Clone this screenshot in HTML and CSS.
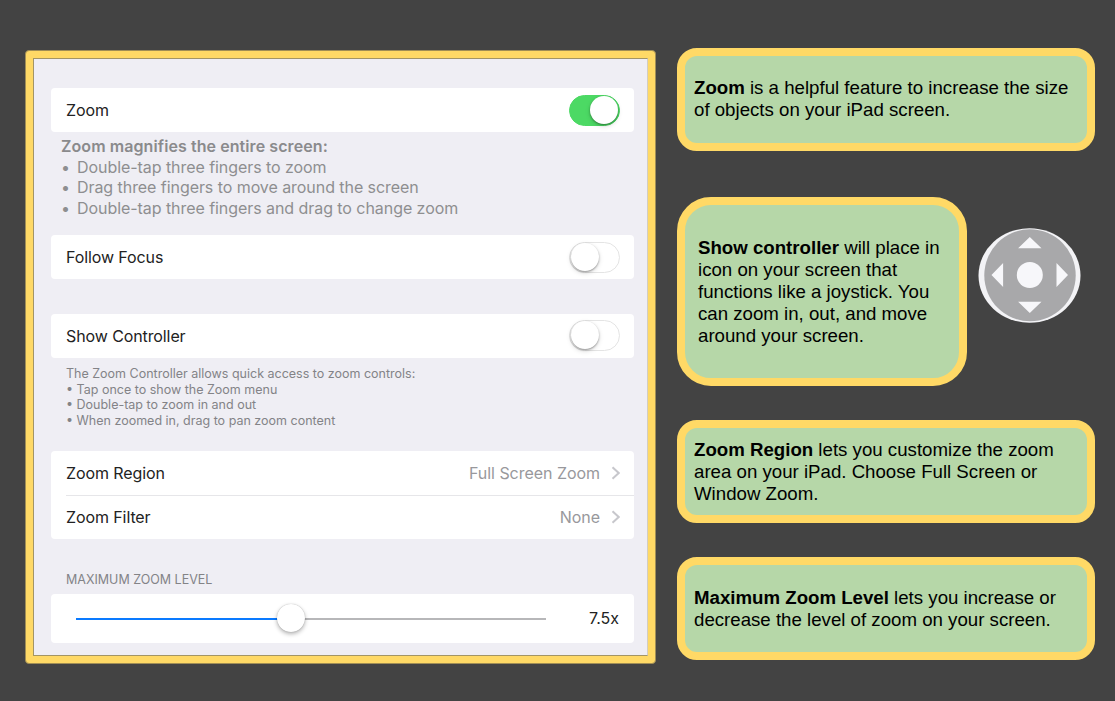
FILE: index.html
```html
<!DOCTYPE html>
<html lang="en">
<head>
    <meta charset="UTF-8">
    <meta name="viewport" content="width=device-width, initial-scale=1.0">
    <title>iPad Zoom Settings</title>
    <link rel="stylesheet" href="styles.css">
</head>
<body>
    <div class="frame">
        <div class="settings">
            <div class="card row">
                <span>Zoom</span>
                <span class="switch on"><span class="knob"></span></span>
            </div>
            <div class="help">
                <strong>Zoom magnifies the entire screen:</strong>
                <ul>
                    <li>Double-tap three fingers to zoom</li>
                    <li>Drag three fingers to move around the screen</li>
                    <li>Double-tap three fingers and drag to change zoom</li>
                </ul>
            </div>

            <div class="card row">
                <span>Follow Focus</span>
                <span class="switch"><span class="knob"></span></span>
            </div>

            <div class="card row controller-row">
                <span>Show Controller</span>
                <span class="switch"><span class="knob"></span></span>
            </div>
            <div class="note">
                The Zoom Controller allows quick access to zoom controls:<br>
                • Tap once to show the Zoom menu<br>
                • Double-tap to zoom in and out<br>
                • When zoomed in, drag to pan zoom content
            </div>

            <div class="card">
                <div class="row">
                    <span>Zoom Region</span>
                    <span class="value">Full Screen Zoom</span>
                    <svg class="chevron" width="9" height="14" viewBox="0 0 9 14"><path d="M1.5 1.2 L7.7 7 L1.5 12.8"/></svg>
                </div>
                <div class="row divided">
                    <span>Zoom Filter</span>
                    <span class="value">None</span>
                    <svg class="chevron" width="9" height="14" viewBox="0 0 9 14"><path d="M1.5 1.2 L7.7 7 L1.5 12.8"/></svg>
                </div>
            </div>

            <div class="section-title">MAXIMUM ZOOM LEVEL</div>
            <div class="card slider-row">
                <div class="track"><div class="fill"></div><div class="thumb"></div></div>
                <span class="level">7.5x</span>
            </div>
        </div>
    </div>

    <div class="notes">
        <div class="callout first"><p><b>Zoom</b> is a helpful feature to increase the size<br>of objects on your iPad screen.</p></div>
        <div class="controller">
            <div class="callout big"><p><b>Show controller</b> will place in<br>icon on your screen that<br>functions like a joystick. You<br>can zoom in, out, and move<br>around your screen.</p></div>
            <svg class="joystick" width="104" height="96" viewBox="0 0 104 96">
                <ellipse cx="51.5" cy="47.5" rx="51" ry="47.3" fill="#f3f3f6"/>
                <ellipse cx="52" cy="47.3" rx="45.7" ry="46" fill="#a8a8aa"/>
                <circle cx="51.8" cy="47" r="13" fill="#f7f7fa"/>
                <path d="M51.8 9 L63.5 20.2 H40.1 Z M51.8 85 L63.5 73.8 H40.1 Z M13.5 47 L25.1 35 V59 Z M90 47 L78.5 35 V59 Z" fill="#f7f7fa"/>
            </svg>
        </div>
        <div class="callout"><p><b>Zoom Region</b> lets you customize the zoom<br>area on your iPad. Choose Full Screen or<br>Window Zoom.</p></div>
        <div class="callout last"><p><b>Maximum Zoom Level</b> lets you increase or<br>decrease the level of zoom on your screen.</p></div>
    </div>
</body>
</html>
```
FILE: styles.css
```css
* {
    box-sizing: border-box;
}
body {
    margin: 0;
    width: 1115px;
    height: 701px;
    overflow: hidden;
    display: flex;
    align-items: flex-start;
    background-color: #434343;
    font-family: 'Liberation Sans', Arial, sans-serif;
}
.frame {
    width: 631px;
    height: 614px;
    margin: 50px 0 0 25px;
    padding: 7px;
    background-color: #ffd966;
    border: 1px solid #a18e55;
    border-radius: 4px;
}
.settings {
    height: 598px;
    padding: 29px 13px 0 17px;
    background-color: #efeef4;
    border: 1px solid #a39565;
    border-right-color: #d3cdc0;
    font-family: Inter, 'Liberation Sans', sans-serif;
    font-size: 16px;
    color: #222;
}
.card {
    background-color: #fff;
    border-radius: 4px;
}
.row {
    display: flex;
    align-items: center;
    height: 44px;
    padding: 0 14px 0 15px;
    letter-spacing: -0.1px;
}
.switch {
    position: relative;
    width: 51px;
    height: 31px;
    margin-left: auto;
    border: 1.5px solid #e4e4e4;
    border-radius: 16px;
}
.knob {
    position: absolute;
    left: 1px;
    top: 0;
    width: 28px;
    height: 28px;
    background-color: #fff;
    border-radius: 50%;
    box-shadow: 0 1px 2px rgba(0, 0, 0, 0.35), 0 2px 5px rgba(0, 0, 0, 0.15);
}
.switch.on {
    background-color: #4cd964;
    border-color: #4cd964;
}
.on .knob {
    left: 20px;
}
.help {
    height: 103px;
    padding: 4px 0 0 10px;
    line-height: 20.7px;
    letter-spacing: -0.06px;
    color: #8e8e90;
}
.help strong {
    display: block;
    font-weight: 600;
    letter-spacing: 0.08px;
    color: #8a8a8c;
}
.help ul {
    margin: 0;
    padding: 0;
    list-style: none;
}
.help li::before {
    content: '•';
    display: inline-block;
    width: 16px;
}
.controller-row {
    margin-top: 35px;
    padding-bottom: 1px;
}
.note {
    height: 93px;
    padding: 8px 0 0 15px;
    font-size: 12.5px;
    line-height: 15.7px;
    color: #838387;
}
.value {
    margin-left: auto;
    letter-spacing: -0.04px;
    color: #98989c;
}
.chevron {
    margin-left: 11px;
    fill: none;
    stroke: #c7c7cc;
    stroke-width: 2;
}
.divided {
    margin-left: 15px;
    padding-left: 0;
    padding-bottom: 2px;
    border-top: 1px solid #e6e6e9;
}
.section-title {
    height: 55px;
    padding: 33px 0 0 15px;
    font-size: 12.5px;
    line-height: 15px;
    color: #838387;
}
.slider-row {
    display: flex;
    align-items: center;
    justify-content: space-between;
    height: 49px;
    padding: 0 15px 0 25px;
}
.level {
    padding-bottom: 1px;
}
.track {
    position: relative;
    width: 470px;
    height: 2px;
    background-color: #b7b7b9;
}
.fill {
    width: 215px;
    height: 2px;
    background-color: #0a7aff;
}
.thumb {
    position: absolute;
    left: 201px;
    top: -14px;
    width: 28px;
    height: 28px;
    background-color: #fff;
    border-radius: 50%;
    box-shadow: 0 0 1px rgba(0, 0, 0, 0.3), 0 2px 4px rgba(0, 0, 0, 0.3);
}
.notes {
    width: 418px;
    margin: 48px 0 0 21px;
}
.callout {
    display: flex;
    align-items: center;
    width: 418px;
    height: 103px;
    padding: 1px 0 0 9px;
    background-color: #b6d7a8;
    border: 8px solid #ffd966;
    border-radius: 20px;
    color: #000;
    font-size: 18.67px;
    line-height: 22px;
}
.callout.first {
    padding: 0 0 1px 9px;
}
.callout p {
    margin: 0;
}
.controller {
    display: flex;
    margin: 46px 0 34px;
}
.callout.big {
    width: 290px;
    height: 189px;
    padding-left: 13px;
    border-radius: 34px;
}
.joystick {
    margin: 31px 0 0 11px;
}
.last {
    margin-top: 34px;
}
```
